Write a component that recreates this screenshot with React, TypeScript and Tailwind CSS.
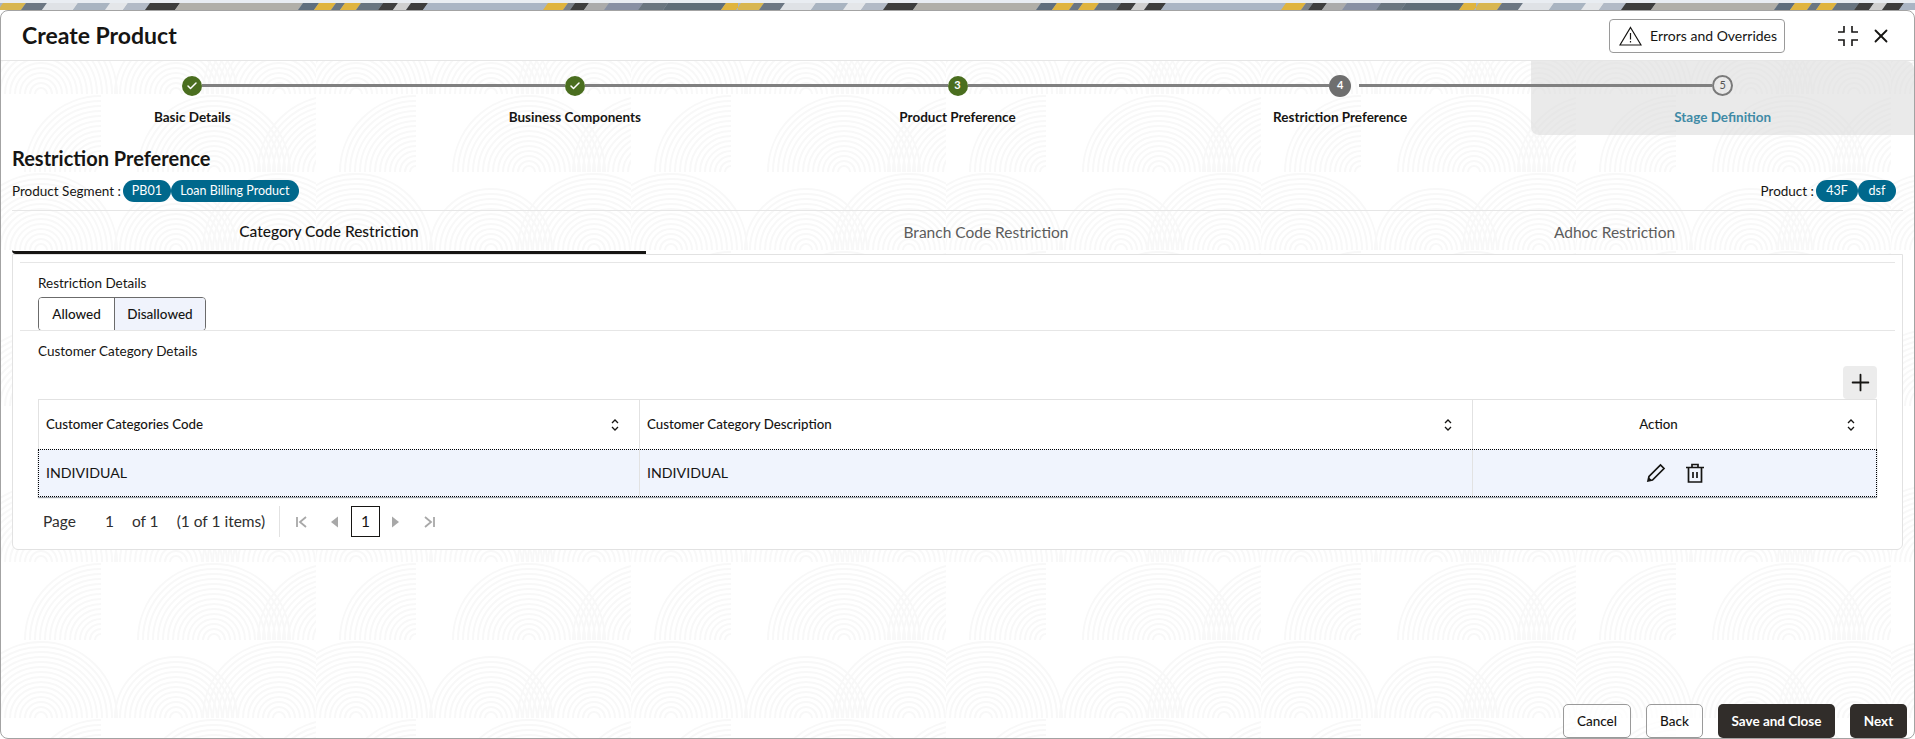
import { Check, X, Plus } from "lucide-react";

const steps = [
  { label: "Basic Details", state: "done" },
  { label: "Business Components", state: "done" },
  { label: "Product Preference", state: "current" },
  { label: "Restriction Preference", state: "active" },
  { label: "Stage Definition", state: "todo" },
];

const stripBands: [number, number, string][] = [
  [0, 23, "#d8b650"],
  [23, 44, "#6c7783"],
  [44, 75, "#dfe2e6"],
  [75, 107, "#a9b4c1"],
  [107, 125, "#e4e6e9"],
  [125, 147, "#b2bac6"],
  [147, 177, "#3d3d3c"],
  [177, 300, "#b1afa8"],
  [300, 316, "#5f6e7d"],
  [316, 333, "#e0b43e"],
  [333, 342, "#6a7682"],
  [342, 358, "#e0b43e"],
  [358, 380, "#687480"],
  [380, 395, "#3f3f3f"],
  [395, 408, "#cfcfcf"],
  [408, 425, "#3d3d3d"],
  [425, 545, "#aab5c4"],
  [545, 565, "#e0b43e"],
  [565, 572, "#7a8088"],
  [572, 586, "#3e3e3e"],
  [586, 606, "#ababab"],
  [606, 640, "#8890a3"],
  [640, 665, "#6a7680"],
  [665, 723, "#5f6d78"],
  [723, 738, "#e0b43e"],
];

function radii(max: number) {
  const out: number[] = [];
  for (let r = 6; r <= max; r += 5) out.push(r);
  return out;
}

const domes = [
  { cx: 100, cy: 78, max: 78, from: -180, to: -90 },
  { cx: 213, cy: 78, max: 78, from: -180, to: 0 },
  { cx: 333, cy: 78, max: 78, from: -180, to: -90 },
  { cx: 40, cy: 156, max: 78, from: -180, to: 0 },
  { cx: 175, cy: 156, max: 62, from: -180, to: 0 },
  { cx: 278, cy: 156, max: 78, from: -180, to: 0 },
];

function arcPath(cx: number, cy: number, r: number, from: number, to: number) {
  const a = (from * Math.PI) / 180;
  const b = (to * Math.PI) / 180;
  return `M${cx + r * Math.cos(a)} ${cy + r * Math.sin(a)} A${r} ${r} 0 0 1 ${cx + r * Math.cos(b)} ${cy + r * Math.sin(b)}`;
}

function Backdrop() {
  return (
    <svg className="absolute inset-0 w-full h-full">
      <defs>
        <pattern id="prints" x="0" y="33" width="315" height="156" patternUnits="userSpaceOnUse">
          {domes.map((d, i) => (
            <g key={i} fill="none" stroke="#f8f8f8" strokeWidth="2">
              {radii(d.max).map((r) => (
                <path key={r} d={arcPath(d.cx, d.cy, r, d.from, d.to)} />
              ))}
            </g>
          ))}
        </pattern>
      </defs>
      <rect width="100%" height="100%" fill="url(#prints)" />
    </svg>
  );
}

function TopStrip() {
  return (
    <div className="h-[10px] bg-[#e9edf2] overflow-hidden">
      <svg className="w-full h-[10px]">
        <defs>
          <pattern id="strip" width="738" height="10" patternUnits="userSpaceOnUse">
            <rect y="3" width="738" height="7" fill="#a9b4c1" />
            {stripBands.map(([a, b, c]) => (
              <polygon key={a} points={`${a + 3},3 ${b + 3},3 ${b - 2},10 ${a - 2},10`} fill={c} />
            ))}
          </pattern>
        </defs>
        <rect width="100%" height="10" fill="url(#strip)" />
      </svg>
    </div>
  );
}

function StepDot({ state, n }: { state: string; n: number }) {
  if (state === "done") {
    return (
      <div className="w-[20px] h-[20px] rounded-full bg-[#4a6e1f] flex items-center justify-center shrink-0">
        <Check className="w-[12px] h-[12px] text-white" strokeWidth={3} />
      </div>
    );
  }
  if (state === "todo") {
    return (
      <div className="w-[21px] h-[21px] rounded-full border-2 border-[#7a7a7a] flex items-center justify-center text-[11px] text-[#555] shrink-0">
        {n}
      </div>
    );
  }
  return (
    <div
      className={
        state === "current"
          ? "w-[20px] h-[20px] rounded-full bg-[#4a6e1f] flex items-center justify-center text-[11px] font-bold text-white shrink-0"
          : "w-[22px] h-[22px] rounded-full bg-[#6f6f6f] flex items-center justify-center text-[11px] font-bold text-white shrink-0"
      }
    >
      {n}
    </div>
  );
}

function Stepper() {
  return (
    <div className="relative grid grid-cols-5 h-[74px]">
      {steps.map((step, i) => (
        <div
          key={step.label}
          className={
            step.state === "todo"
              ? "flex flex-col items-center pt-[14px] bg-[#dcdcdc]/60 rounded-bl-lg rounded-tr-lg"
              : "flex flex-col items-center pt-[14px]"
          }
        >
          <div className="w-full h-[21px] flex items-center">
            <div className={i === 0 ? "flex-1" : "flex-1 h-[3px] bg-[#808080]"} />
            <StepDot state={step.state} n={i + 1} />
            <div className="flex-1 flex">
              <div
                className={
                  i === 4 ? "flex-1" : i === 3 ? "flex-1 h-[3px] bg-[#808080] ml-[8px]" : "flex-1 h-[3px] bg-[#808080]"
                }
              />
            </div>
          </div>
          <div
            className={
              step.state === "todo"
                ? "mt-[11px] text-[13.5px] leading-[20px] font-bold text-[#3f8aa6]"
                : "mt-[11px] text-[13.5px] leading-[20px] font-bold text-[#161513]"
            }
          >
            {step.label}
          </div>
        </div>
      ))}
    </div>
  );
}

function Pill({ children, className }: { children: React.ReactNode; className: string }) {
  return (
    <span className={`h-[22px] rounded-full bg-[#00688c] text-white text-[12.5px] flex items-center justify-center ${className}`}>
      {children}
    </span>
  );
}

function SortIcon() {
  return (
    <svg width="10" height="14" viewBox="0 0 10 14" fill="none" stroke="#161513" strokeWidth="1.3">
      <path d="M2 5 L5 2 L8 5" />
      <path d="M2 9 L5 12 L8 9" />
    </svg>
  );
}

function PagerIcon({ d, stroke }: { d: string; stroke?: boolean }) {
  return (
    <svg width="14" height="16" viewBox="0 0 14 16" fill={stroke ? "none" : "#a8a8a8"} stroke={stroke ? "#a8a8a8" : "none"} strokeWidth="1.8">
      <path d={d} />
    </svg>
  );
}

export default function App() {
  return (
    <div className="w-[1915px] h-[739px] overflow-hidden bg-white text-[#161513] font-['Lato','Noto_Sans',sans-serif]">
      <TopStrip />
      <div className="h-[729px] flex flex-col border border-[#a3a3a3] rounded-lg overflow-hidden bg-white">
        {/* Title bar */}
        <div className="h-[50px] shrink-0 border-b border-[#e6e6e6] flex items-center pl-[21px] pr-[22px]">
          <h1 className="text-[23px] font-bold">Create Product</h1>
          <button className="ml-auto w-[176px] h-[34px] rounded-[4px] border border-[#9a9a9a] flex items-center pl-[9px] text-[14px]">
            <svg width="23" height="20" viewBox="0 0 23 20" fill="none" stroke="#161513" strokeWidth="1.2" className="mr-[8px]">
              <path d="M11.5 1.5 L22 19 H1 Z" />
              <path d="M11.5 7 V13.5 M11.5 15 V16.5" />
            </svg>
            Errors and Overrides
          </button>
          <svg width="22" height="22" viewBox="0 0 22 22" fill="none" stroke="#161513" strokeWidth="1.6" className="ml-[52px]">
            <path d="M1 7 H7 V1 M15 1 V7 H21 M1 15 H7 V21 M21 15 H15 V21" />
          </svg>
          <X className="w-[22px] h-[22px] ml-[11px]" strokeWidth={2} />
        </div>

        <div className="relative flex-1 flex flex-col min-h-0">
          <Backdrop />
          <Stepper />

          <div className="relative px-[11px] flex-1 flex flex-col min-h-0">
            <h2 className="pt-[10px] text-[20px] leading-[26px] font-bold">Restriction Preference</h2>
            <div className="mt-[9px] flex items-center justify-between text-[13.5px] pr-[7px]">
              <div className="flex items-center">
                <span className="mr-[2px]">Product Segment :</span>
                <Pill className="w-[48px]">PB01</Pill>
                <Pill className="w-[128px]">Loan Billing Product</Pill>
              </div>
              <div className="flex items-center">
                <span className="mr-[2px]">Product :</span>
                <Pill className="w-[42px]">43F</Pill>
                <Pill className="w-[38px]">dsf</Pill>
              </div>
            </div>

            {/* Tabs */}
            <div className="mt-[8px] border-t border-[#e6e6e6] flex h-[44px] text-[15.5px]">
              <div className="w-[634px] flex items-center justify-center border-b-[3px] border-[#161513] rounded-bl-sm font-medium pt-[2px]">
                Category Code Restriction
              </div>
              <div className="w-[680px] flex items-center justify-center text-[#5c5c5c]">Branch Code Restriction</div>
              <div className="flex-1 flex items-center justify-center text-[#5c5c5c]">Adhoc Restriction</div>
            </div>

            {/* Card */}
            <div className="h-[296px] bg-white border border-[#e2e2e2] rounded-b-md px-[7px] pt-[7px]">
              <div className="border-t border-[#e6e6e6]">
                <div className="pl-[18px] pt-[10px] text-[13.5px] leading-[20px]">Restriction Details</div>
                <div className="ml-[18px] mt-[4px] w-[168px] h-[34px] flex border border-[#6b6b6b] rounded-[4px] overflow-hidden text-[13.5px] font-medium">
                  <div className="w-[75px] flex items-center justify-center bg-white">Allowed</div>
                  <div className="flex-1 flex items-center justify-center bg-[#f0f3fc] border-l border-[#6b6b6b]">Disallowed</div>
                </div>
              </div>
              <div className="border-t border-[#e6e6e6] -mt-px">
                <div className="pl-[18px] pt-[10px] text-[13.5px] leading-[20px]">Customer Category Details</div>
                <div className="mx-[18px] pt-[5px] flex justify-end">
                  <button className="w-[34px] h-[33px] bg-[#ececec] rounded-[4px] flex items-center justify-center">
                    <Plus className="w-[27px] h-[27px]" strokeWidth={1.6} />
                  </button>
                </div>

                {/* Table */}
                <div className="mx-[18px] text-[13.3px]">
                  <div className="h-[50px] grid grid-cols-[600px_833px_1fr] border-t border-x border-[#e2e2e2] font-medium">
                    <div className="flex items-center justify-between pl-[7px] pr-[19px]">
                      Customer Categories Code
                      <SortIcon />
                    </div>
                    <div className="flex items-center justify-between pl-[7px] pr-[19px] border-l border-[#e2e2e2]">
                      Customer Category Description
                      <SortIcon />
                    </div>
                    <div className="relative flex items-center justify-center border-l border-[#e2e2e2] pr-[32px]">
                      Action
                      <span className="absolute right-[20px] flex">
                        <SortIcon />
                      </span>
                    </div>
                  </div>
                  <div className="h-[48px] grid grid-cols-[600px_833px_1fr] bg-[#f0f4fd] border border-dotted border-black shadow-[0_1px_1px_#9aa0a8] text-[14.2px]">
                    <div className="flex items-center pl-[7px]">INDIVIDUAL</div>
                    <div className="flex items-center pl-[7px] border-l border-[#e2e2e2]">INDIVIDUAL</div>
                    <div className="flex items-center justify-center gap-[19px] border-l border-[#e2e2e2] pl-[2px]">
                      <svg width="20" height="20" viewBox="0 0 20 20" fill="none" stroke="#161513" strokeWidth="1.7">
                        <path d="M2 18 L3 13.5 L14.5 2 L18 5.5 L6.5 17 Z M2.5 15 L5 17.5" />
                      </svg>
                      <svg width="20" height="20" viewBox="0 0 20 20" fill="none" stroke="#161513" strokeWidth="1.7">
                        <path d="M1 4.5 H19 M3.5 4.5 V19 H16.5 V4.5 M7 4.5 V1.5 H13 V4.5 M8 9 V15 M12 9 V15" />
                      </svg>
                    </div>
                  </div>
                </div>

                {/* Pager */}
                <div className="ml-[23px] mt-[9px] h-[31px] flex items-center text-[15.5px] text-[#2f2f2f]">
                  <span>Page</span>
                  <span className="ml-[29px]">1</span>
                  <span className="ml-[18px]">of 1</span>
                  <span className="ml-[18px]">(1 of 1 items)</span>
                  <div className="ml-[14px] h-[31px] border-l border-[#e2e2e2]" />
                  <span className="ml-[15px] flex">
                    <PagerIcon stroke d="M2 3 V13 M11 3 L5 8 L11 13" />
                  </span>
                  <span className="ml-[19px] flex">
                    <PagerIcon d="M10 2.5 V13.5 L3 8 Z" />
                  </span>
                  <span className="ml-[9px] w-[29px] h-[31px] border border-[#161513] flex items-center justify-center text-[#161513]">1</span>
                  <span className="ml-[8px] flex">
                    <PagerIcon d="M4 2.5 V13.5 L11 8 Z" />
                  </span>
                  <span className="ml-[20px] flex">
                    <PagerIcon stroke d="M3 3 L9 8 L3 13 M12 3 V13" />
                  </span>
                </div>
              </div>
            </div>

            {/* Footer actions */}
            <div className="mt-auto -mr-[4px] flex justify-end gap-[15px] text-[13.5px] font-bold">
              <button className="w-[68px] h-[34px] rounded-[5px] border border-[#9a9a9a] bg-white/70 font-medium">Cancel</button>
              <button className="w-[57px] h-[34px] rounded-[5px] border border-[#9a9a9a] bg-white/70 font-medium">Back</button>
              <button className="w-[117px] h-[34px] rounded-[5px] bg-[#312d2a] text-white">Save and Close</button>
              <button className="w-[57px] h-[34px] rounded-[5px] bg-[#312d2a] text-white">Next</button>
            </div>
          </div>
        </div>
      </div>
    </div>
  );
}
